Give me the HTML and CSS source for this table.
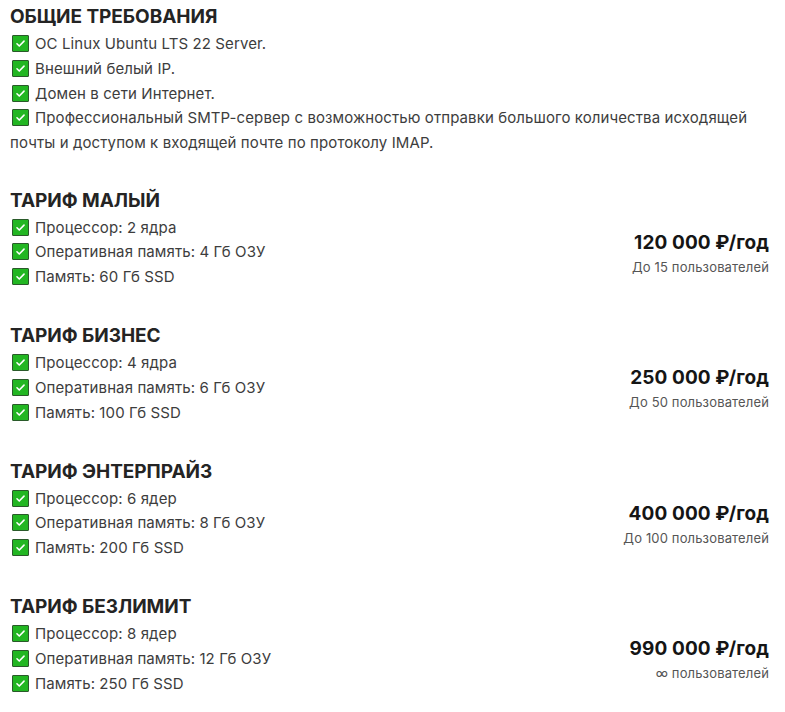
FILE: index.html
```html
<!DOCTYPE html>
<html lang="ru">
<head>
<meta charset="utf-8">
<link rel="stylesheet" href="styles.css">
</head>
<body>
<main class="page">
  <section class="block block--general">
    <h2 class="block__title">ОБЩИЕ ТРЕБОВАНИЯ</h2>
    <ul class="checks">
      <li class="checks__item"><span class="check"><svg viewBox="0 0 17 17"><path d="M4.5 8.8l2.6 2.6 5.4-5.6"/></svg></span>ОС Linux Ubuntu LTS 22 Server.</li>
      <li class="checks__item"><span class="check"><svg viewBox="0 0 17 17"><path d="M4.5 8.8l2.6 2.6 5.4-5.6"/></svg></span>Внешний белый IP.</li>
      <li class="checks__item"><span class="check"><svg viewBox="0 0 17 17"><path d="M4.5 8.8l2.6 2.6 5.4-5.6"/></svg></span>Домен в сети Интернет.</li>
      <li class="checks__item"><span class="check"><svg viewBox="0 0 17 17"><path d="M4.5 8.8l2.6 2.6 5.4-5.6"/></svg></span>Профессиональный SMTP-сервер с возможностью отправки большого количества исходящей почты и доступом к входящей почте по протоколу IMAP.</li>
    </ul>
  </section>

  <section class="block">
    <h2 class="block__title">ТАРИФ МАЛЫЙ</h2>
    <div class="tariff">
      <ul class="checks">
        <li class="checks__item"><span class="check"><svg viewBox="0 0 17 17"><path d="M4.5 8.8l2.6 2.6 5.4-5.6"/></svg></span>Процессор: 2 ядра</li>
        <li class="checks__item"><span class="check"><svg viewBox="0 0 17 17"><path d="M4.5 8.8l2.6 2.6 5.4-5.6"/></svg></span>Оперативная память: 4 Гб ОЗУ</li>
        <li class="checks__item"><span class="check"><svg viewBox="0 0 17 17"><path d="M4.5 8.8l2.6 2.6 5.4-5.6"/></svg></span>Память: 60 Гб SSD</li>
      </ul>
      <div class="price">
        <div class="price__value">120 000 ₽/год</div>
        <div class="price__note">До 15 пользователей</div>
      </div>
    </div>
  </section>

  <section class="block">
    <h2 class="block__title">ТАРИФ БИЗНЕС</h2>
    <div class="tariff">
      <ul class="checks">
        <li class="checks__item"><span class="check"><svg viewBox="0 0 17 17"><path d="M4.5 8.8l2.6 2.6 5.4-5.6"/></svg></span>Процессор: 4 ядра</li>
        <li class="checks__item"><span class="check"><svg viewBox="0 0 17 17"><path d="M4.5 8.8l2.6 2.6 5.4-5.6"/></svg></span>Оперативная память: 6 Гб ОЗУ</li>
        <li class="checks__item"><span class="check"><svg viewBox="0 0 17 17"><path d="M4.5 8.8l2.6 2.6 5.4-5.6"/></svg></span>Память: 100 Гб SSD</li>
      </ul>
      <div class="price">
        <div class="price__value">250 000 ₽/год</div>
        <div class="price__note">До 50 пользователей</div>
      </div>
    </div>
  </section>

  <section class="block">
    <h2 class="block__title">ТАРИФ ЭНТЕРПРАЙЗ</h2>
    <div class="tariff">
      <ul class="checks">
        <li class="checks__item"><span class="check"><svg viewBox="0 0 17 17"><path d="M4.5 8.8l2.6 2.6 5.4-5.6"/></svg></span>Процессор: 6 ядер</li>
        <li class="checks__item"><span class="check"><svg viewBox="0 0 17 17"><path d="M4.5 8.8l2.6 2.6 5.4-5.6"/></svg></span>Оперативная память: 8 Гб ОЗУ</li>
        <li class="checks__item"><span class="check"><svg viewBox="0 0 17 17"><path d="M4.5 8.8l2.6 2.6 5.4-5.6"/></svg></span>Память: 200 Гб SSD</li>
      </ul>
      <div class="price">
        <div class="price__value">400 000 ₽/год</div>
        <div class="price__note">До 100 пользователей</div>
      </div>
    </div>
  </section>

  <section class="block">
    <h2 class="block__title">ТАРИФ БЕЗЛИМИТ</h2>
    <div class="tariff">
      <ul class="checks">
        <li class="checks__item"><span class="check"><svg viewBox="0 0 17 17"><path d="M4.5 8.8l2.6 2.6 5.4-5.6"/></svg></span>Процессор: 8 ядер</li>
        <li class="checks__item"><span class="check"><svg viewBox="0 0 17 17"><path d="M4.5 8.8l2.6 2.6 5.4-5.6"/></svg></span>Оперативная память: 12 Гб ОЗУ</li>
        <li class="checks__item"><span class="check"><svg viewBox="0 0 17 17"><path d="M4.5 8.8l2.6 2.6 5.4-5.6"/></svg></span>Память: 250 Гб SSD</li>
      </ul>
      <div class="price">
        <div class="price__value">990 000 ₽/год</div>
        <div class="price__note">∞ пользователей</div>
      </div>
    </div>
  </section>
</main>
</body>
</html>
```

FILE: styles.css
```css
* { box-sizing: border-box; }

html, body {
  margin: 0;
  padding: 0;
  background: #ffffff;
}

body {
  font-family: Inter, "Noto Sans", "DejaVu Sans", sans-serif;
  color: #333333;
}

.page {
  display: flex;
  flex-direction: column;
  gap: 34.25px;
  padding: 5px 16px 0 10px;
}

.block__title {
  margin: 0 0 3px;
  font-size: 19px;
  line-height: 24px;
  font-weight: 700;
  color: #242424;
  letter-spacing: -0.05px;
}

.block--general {
  margin-bottom: -1.5px;
}

.checks {
  list-style: none;
  margin: 0;
  padding: 0;
  flex: 1;
}

.checks__item {
  font-size: 15px;
  line-height: 24.75px;
  font-weight: 400;
  color: #3d3d3d;
  letter-spacing: 0.1px;
}

.check {
  display: inline-block;
  width: 17px;
  height: 17px;
  margin: 0 6px 0 2px;
  vertical-align: -3px;
  background: #22b622;
  border: 1px solid #2a5a2a;
  border-radius: 1px;
}

.check svg {
  display: block;
  width: 15px;
  height: 15px;
  fill: none;
  stroke: #ffffff;
  stroke-width: 1.8;
  stroke-linecap: round;
  stroke-linejoin: round;
}

.tariff {
  display: flex;
  align-items: center;
}

.price {
  text-align: right;
  padding-top: 4px;
}

.price__value {
  font-size: 19px;
  line-height: 24px;
  font-weight: 700;
  color: #151515;
  letter-spacing: 0.1px;
}

.price__note {
  font-size: 13px;
  line-height: 24px;
  color: #555555;
  letter-spacing: 0.15px;
}
```
